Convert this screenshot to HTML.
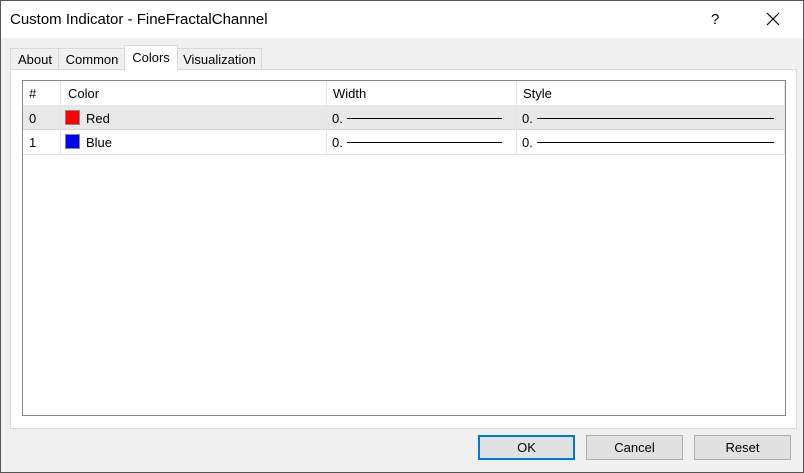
<html><head><style>
body{margin:0;width:804px;height:473px;position:relative;background:#f0f0f0;font-family:"Liberation Sans",sans-serif;font-size:13px;color:#000;overflow:hidden}
.a{position:absolute}
.win{left:0;top:0;width:802px;height:471px;border:1px solid #555;}
.title{left:1px;top:1px;width:802px;height:37px;background:#fff}
.tab{position:absolute;top:48px;height:20px;border:1px solid #d9d9d9;border-bottom:none;background:#f0f0f0;line-height:21px;text-align:center}
.panel{left:10px;top:69px;width:785px;height:358px;background:#fff;border:1px solid #d9d9d9}
.list{left:22px;top:80px;width:762px;height:334px;border:1px solid #828790;background:#fff}
.cell{position:absolute;height:24px;line-height:25px;border-right:1px solid #e5e5e5;padding-left:6px;box-sizing:border-box}
.btn{position:absolute;top:435px;width:97px;height:25px;box-sizing:border-box;border:1px solid #adadad;background:#e1e1e1;text-align:center;line-height:24px}
.ln{position:absolute;height:1px;background:#000}
</style></head><body>
<div class="a win"></div>
<div class="a title"></div>
<div class="a" style="left:10px;top:11px;font-size:15px">Custom Indicator - FineFractalChannel</div>
<div class="a" style="left:711px;top:11px;font-size:15px">?</div>
<svg class="a" style="left:766px;top:12px" width="14" height="14"><path d="M1 1L13 13M13 1L1 13" stroke="#000" stroke-width="1.2"/></svg>
<div class="a panel"></div>
<div class="tab" style="left:10px;width:48px">About</div>
<div class="tab" style="left:58px;width:66px">Common</div>
<div class="tab" style="left:177px;width:83px">Visualization</div>
<div class="tab" style="left:124px;top:45px;height:25px;width:52px;background:#fff;line-height:24px">Colors</div>
<div class="a list">
<div class="a" style="left:0;top:0;width:762px;height:24px;border-bottom:1px solid #e5e5e5"></div>
<div class="a" style="left:0;top:25px;width:762px;height:23px;background:#e8e8e8;border-bottom:1px solid #d5d5d5"></div>
<div class="a" style="left:0;top:49px;width:762px;height:24px;border-bottom:1px solid #e0e0e0"></div>
<div class="cell" style="left:0;top:0;width:38px">#</div>
<div class="cell" style="left:38px;top:0;width:266px;padding-left:7px">Color</div>
<div class="cell" style="left:304px;top:0;width:190px">Width</div>
<div class="cell" style="left:494px;top:0;width:268px">Style</div>
<div class="cell" style="left:0;top:25px;width:38px;height:24px">0</div>
<div class="cell" style="left:38px;top:25px;width:266px;padding-left:25px">Red</div>
<div class="cell" style="left:304px;top:25px;width:190px;padding-left:5px">0.</div>
<div class="cell" style="left:494px;top:25px;width:268px;padding-left:5px">0.</div>
<div class="cell" style="left:0;top:49px;width:38px">1</div>
<div class="cell" style="left:38px;top:49px;width:266px;padding-left:25px">Blue</div>
<div class="cell" style="left:304px;top:49px;width:190px;padding-left:5px">0.</div>
<div class="cell" style="left:494px;top:49px;width:268px;padding-left:5px">0.</div>
<div class="a" style="left:42px;top:29px;width:13px;height:13px;background:#f00;border:1px solid #888"></div>
<div class="a" style="left:42px;top:53px;width:13px;height:13px;background:#00f;border:1px solid #888"></div>
<div class="ln" style="left:324px;top:37px;width:155px"></div>
<div class="ln" style="left:514px;top:37px;width:237px"></div>
<div class="ln" style="left:324px;top:61px;width:155px"></div>
<div class="ln" style="left:514px;top:61px;width:237px"></div>
</div>
<div class="btn" style="left:478px;border:2px solid #0078d7;line-height:22px">OK</div>
<div class="btn" style="left:586px">Cancel</div>
<div class="btn" style="left:694px">Reset</div>
</body></html>
